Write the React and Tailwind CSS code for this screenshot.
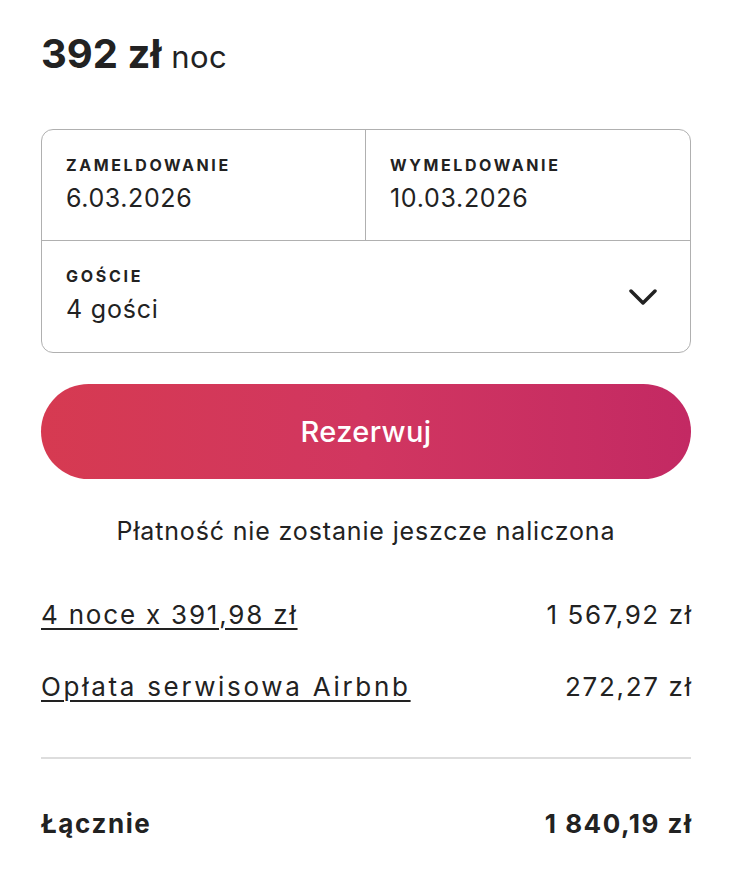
import React from "react";

function Chevron() {
  return (
    <svg width="28" height="16" viewBox="0 0 28 16" fill="none" stroke="#222222" strokeWidth="3.5" strokeLinecap="round" strokeLinejoin="round">
      <path d="M2 2 L14 14 L26 2" />
    </svg>
  );
}

export default function App() {
  return (
    <div className="w-[732px] h-[886px] bg-white text-[#222222] px-[41px] pt-[24px]" style={{ fontFamily: "Inter, 'Noto Sans', sans-serif" }}>
      <div className="flex items-baseline gap-[10px]">
        <span className="text-[40px] font-bold leading-[60px]">392 zł</span>
        <span className="text-[31px] tracking-[0.5px]">noc</span>
      </div>

      <div className="mt-[45px] border-[1.5px] border-[#b0b0b0] rounded-[12px] overflow-hidden">
        <div className="grid grid-cols-2 h-[111px] border-b-[1.5px] border-[#b0b0b0]">
          <div className="pl-[24px] pt-[22px] border-r-[1.5px] border-[#b0b0b0]">
            <div className="text-[16px] font-bold leading-[26px] tracking-[2.6px]">ZAMELDOWANIE</div>
            <div className="text-[25px] leading-[40px] tracking-[0.6px]">6.03.2026</div>
          </div>
          <div className="pl-[24px] pt-[22px]">
            <div className="text-[16px] font-bold leading-[26px] tracking-[2.6px]">WYMELDOWANIE</div>
            <div className="text-[25px] leading-[40px] tracking-[0.7px]">10.03.2026</div>
          </div>
        </div>
        <div className="h-[111px] flex items-center justify-between pl-[24px] pr-[33px]">
          <div className="self-start pt-[22px]">
            <div className="text-[16px] font-bold leading-[26px] tracking-[2.7px]">GOŚCIE</div>
            <div className="text-[25px] leading-[40px] tracking-[0.8px]">4 gości</div>
          </div>
          <Chevron />
        </div>
      </div>

      <button className="mt-[31px] w-full h-[95px] rounded-full bg-gradient-to-r from-[#d63a51] via-[#d13660] to-[#c32963] text-white text-[29px] font-medium tracking-[0.4px]">
        Rezerwuj
      </button>

      <div className="mt-[36px] text-center text-[25px] tracking-[0.85px] leading-[32px]">
        Płatność nie zostanie jeszcze naliczona
      </div>

      <div className="mt-[48px] flex flex-col gap-[32px]">
        <div className="flex justify-between items-center text-[26px] leading-[40px]">
          <span className="underline underline-offset-[4px] decoration-[1.5px] tracking-[1.8px]">4 noce x 391,98 zł</span>
          <span className="tracking-[1.6px] -mr-[1.6px]">1 567,92 zł</span>
        </div>
        <div className="flex justify-between items-center text-[26px] leading-[40px]">
          <span className="underline underline-offset-[4px] decoration-[1.5px] tracking-[2.7px]">Opłata serwisowa Airbnb</span>
          <span className="tracking-[1.7px] -mr-[1.7px]">272,27 zł</span>
        </div>
      </div>

      <div className="mt-[50px] border-t-2 border-[#dddddd]" />

      <div className="mt-[45px] flex justify-between items-center text-[26px] font-bold leading-[40px]">
        <span className="tracking-[1.6px]">Łącznie</span>
        <span className="tracking-[1.5px] -mr-[1.5px]">1 840,19 zł</span>
      </div>
    </div>
  );
}
